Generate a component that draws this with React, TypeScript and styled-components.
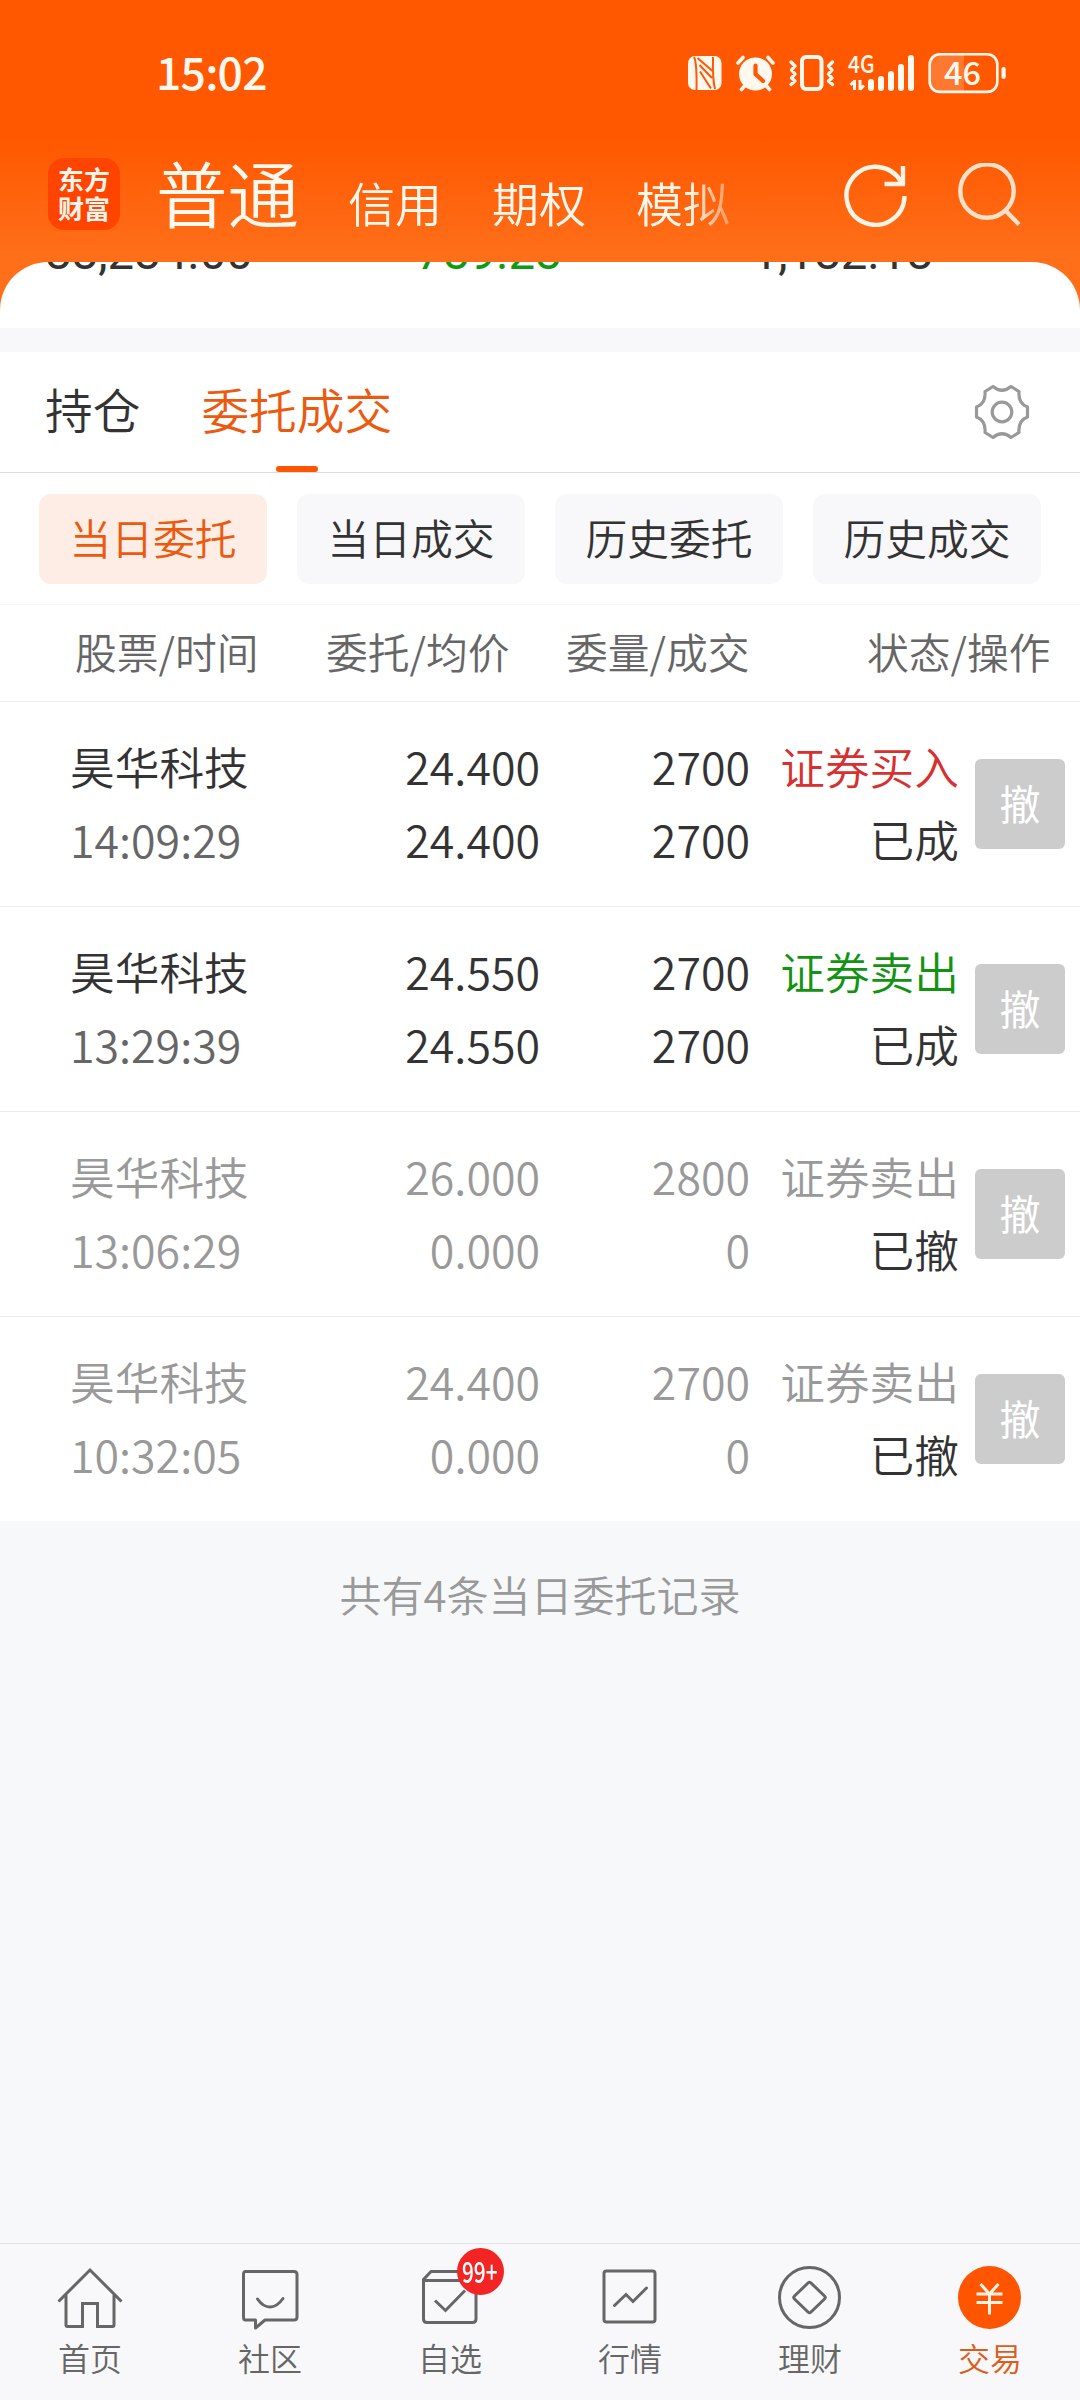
import React from "react";
import styled, { createGlobalStyle, css } from "styled-components";

const GlobalStyle = createGlobalStyle`
  html, body { margin: 0; padding: 0; background: #f6f8fa; }
  body {
    font-family: "Noto Sans CJK SC", "Noto Sans", sans-serif;
    font-weight: 350;
    color: #333;
  }
  * { box-sizing: border-box; }
  button { font: inherit; color: inherit; border: 0; padding: 0; background: none; }
`;

const Screen = styled.div`
  width: 1080px;
  height: 2400px;
  display: flex;
  flex-direction: column;
  overflow: hidden;
  white-space: nowrap;
  background: #f6f8fa;
`;

const Hero = styled.div`
  height: 328px;
  flex: none;
  display: flex;
  flex-direction: column;
  background: linear-gradient(#ff5800 0, #ff5800 140px, #ff6f1a 258px, #ff6f1a 100%);
`;

const StatusBar = styled.div`
  height: 146px;
  padding: 0 74px 0 156px;
  display: flex;
  align-items: center;
  justify-content: space-between;
  color: #fff8ee;
`;

const Clock = styled.span`
  font-size: 44.5px;
  line-height: 60px;
  margin-top: -4px;
  font-weight: 500;
  letter-spacing: -0.8px;
`;

const StatusIcons = styled.svg`
  width: 322px;
  height: 44px;
  display: block;
`;

const TitleBar = styled.header`
  height: 116px;
  padding: 0 57px 0 48px;
  display: flex;
  align-items: center;
  color: #fff8ee;
`;

const Logo = styled.div`
  width: 72px;
  height: 72px;
  margin-top: -20px;
  border-radius: 16px;
  background: #ff4400;
  display: flex;
  flex-direction: column;
  justify-content: center;
  align-items: center;
  font-size: 26px;
  line-height: 29px;
  padding-bottom: 2px;
  font-weight: 700;
  color: #fff4ea;
`;

const Accounts = styled.nav`
  width: 590px;
  height: 116px;
  margin-left: 36px;
  display: flex;
  align-items: baseline;
  overflow: hidden;
  mask-image: linear-gradient(90deg, #000 532px, transparent 597px);
`;

const Account = styled.span<{ $active?: boolean }>`
  font-size: ${(p) => (p.$active ? 71.5 : 47)}px;
  line-height: 90px;
  margin-right: ${(p) => (p.$active ? 49 : 50)}px;
`;

const HeaderIcon = styled.svg<{ $left: number }>`
  width: 64px;
  height: 64px;
  flex: none;
  margin-left: ${(p) => p.$left}px;
  margin-top: -18px;
  display: block;
  fill: none;
  stroke-width: 4.4;
`;

const Summary = styled.section`
  height: 66px;
  border-radius: 48px 48px 0 0;
  background: #fff;
  overflow: hidden;
  padding: 0 147px 0 45px;
  display: grid;
  grid-template-columns: 1fr 1fr 1fr;
`;

const Amount = styled.span<{ $tone?: "down"; $align: string }>`
  font-family: Roboto, "Noto Sans CJK SC", sans-serif;
  font-weight: 400;
  font-size: 47.3px;
  line-height: 60px;
  height: 60px;
  margin-top: -39px;
  text-align: ${(p) => p.$align};
  color: ${(p) => (p.$tone === "down" ? "#0f9a12" : "#333")};
`;

const Divider = styled.div`
  height: 24px;
  flex: none;
  background: #f8f8fa;
`;

const Tabs = styled.div`
  height: 121px;
  flex: none;
  padding: 0 50px 0 45px;
  display: flex;
  justify-content: space-between;
  background: #fff;
  border-bottom: 1px solid #dcdcdc;
`;

const TabGroup = styled.div`
  display: flex;
  gap: 61px;
`;

const Tab = styled.button<{ $active?: boolean }>`
  height: 120px;
  display: flex;
  flex-direction: column;
  align-items: center;
  justify-content: space-between;
  font-size: 47.7px;
  line-height: 114px;
  color: ${(p) => (p.$active ? "#ec5a10" : "#333")};
  ${(p) =>
    p.$active &&
    css`
      &::after {
        content: "";
        width: 42px;
        height: 6px;
        border-radius: 3px;
        background: #ff5500;
      }
    `}
`;

const Gear = styled.svg`
  width: 56px;
  height: 56px;
  margin-top: 32px;
  fill: none;
  stroke: #999;
  stroke-width: 3.2;
`;

const Filters = styled.div`
  height: 132px;
  flex: none;
  padding: 21px 39px 0;
  display: grid;
  grid-template-columns: repeat(4, 228px);
  gap: 30px;
  background: #fff;
  border-bottom: 1px solid #f5f5f5;
`;

const Filter = styled.button<{ $active?: boolean }>`
  height: 90px;
  border-radius: 12px;
  font-size: 41.8px;
  line-height: 87px;
  padding-bottom: 3px;
  text-align: center;
  background: ${(p) => (p.$active ? "#feede5" : "#f8f8fa")};
  color: ${(p) => (p.$active ? "#ec5a10" : "#333")};
`;

const ColumnHeads = styled.div`
  height: 96px;
  flex: none;
  padding: 0 31px 0 75px;
  display: grid;
  grid-template-columns: 251px 240px 301px 1fr;
  background: #fff;
  font-size: 41.8px;
  line-height: 93px;
  color: #666;

  span:last-child { text-align: right; }
`;

const OrderRow = styled.div<{ $dim?: boolean }>`
  height: 205px;
  flex: none;
  padding: 27px 15px 0 70px;
  display: grid;
  grid-template-columns: 230px 240px 210px 210px 90px;
  justify-content: space-between;
  border-top: 1px solid #ececec;
  background: #fff;
  color: ${(p) => (p.$dim ? "#999" : "#333")};
`;

const Pair = styled.div<{ $right?: boolean }>`
  display: flex;
  flex-direction: column;
  align-items: ${(p) => (p.$right ? "flex-end" : "flex-start")};
  font-size: 44.7px;
  line-height: 73px;
  height: 146px;
`;

const Time = styled.span<{ $dim?: boolean }>`
  color: ${(p) => (p.$dim ? "#999" : "#666")};
`;

const Side = styled.span<{ $color: string }>`
  color: ${(p) => p.$color};
`;

const State = styled.span`
  color: #333;
`;

const Cancel = styled.button`
  width: 90px;
  height: 90px;
  margin-top: 30px;
  border-radius: 6px;
  background: #ccc;
  color: #fff;
  font-size: 41px;
  line-height: 87px;
  padding-bottom: 3px;
  font-weight: 400;
  text-align: center;
`;

const Columns = styled.div`
  display: grid;
  grid-template-columns: 230px 240px 210px 209px;
`;

const OrderLine = styled(OrderRow)`
  grid-template-columns: 889px 90px;
`;

const Summing = styled.p`
  margin: 0;
  flex: 1;
  padding-top: 43px;
  text-align: center;
  font-size: 42px;
  line-height: 60px;
  color: #999;
`;

const BottomNav = styled.nav`
  height: 157px;
  flex: none;
  display: grid;
  grid-template-columns: repeat(6, 1fr);
  border-top: 1px solid #e2e2e4;
  background: #f8f8fa;
`;

const NavItem = styled.div<{ $active?: boolean }>`
  position: relative;
  padding-top: 15px;
  display: flex;
  flex-direction: column;
  align-items: center;
  font-size: 32px;
  line-height: 40px;
  color: ${(p) => (p.$active ? "#dd5c18" : "#666")};
`;

const NavIcon = styled.svg`
  width: 72px;
  height: 72px;
  margin-bottom: 6px;
  display: block;
  fill: none;
  stroke: #666;
  stroke-width: 3;
`;

const Badge = styled.span`
  position: absolute;
  left: 96.5px;
  top: 4px;
  width: 47px;
  height: 47px;
  border-radius: 50%;
  background: #f22424;
  color: #fff;
  display: flex;
  justify-content: center;
  font-size: 29px;
  line-height: 44px;
  font-weight: 500;
`;

const BadgeCount = styled.span`
  transform: scaleX(0.72);
`;

const SvgText = styled.text`
  font-weight: 500;
  fill: #fff8ee;
`;

function StatusGlyphs() {
  const bars = [
    [868, 79],
    [878, 76],
    [888, 71],
    [898, 64],
    [908, 55],
  ];
  return (
    <StatusIcons viewBox="684 51 322 44" fill="#fff8ee">
      <rect x="688" y="56" width="33.5" height="34" rx="7" />
      <path
        d="M694 57 Q697 62 696.500 90 M697.500 58 L712.500 71 M699.500 65 L712 78 M700 71.500 L711 88.500 M713 57 Q712.500 80 715 89"
        stroke="#ff5800" strokeWidth="2" fill="none"
      />

      <circle cx="755.500" cy="74" r="16.500" />
      <path d="M738 63 L743 57.500 M773 63 L768 57.500 M744.500 86 L741.500 89.500 M766.500 86 L769.500 89.500" stroke="#fff8ee" strokeWidth="3.600" strokeLinecap="round" />
      <path d="M755.500 65.500 V74 L763 81" stroke="#ff5800" strokeWidth="4.200" fill="none" strokeLinecap="round" />

      <rect x="802" y="57" width="19.500" height="32" rx="4" fill="none" stroke="#fff8ee" strokeWidth="4" />
      <path
        d="M791 62 L795 66 L791.500 70 L795 74 L791.500 78 L795 81 L791 84.500 M832.500 62 L828.500 66 L832 70 L828.500 74 L832 78 L828.500 81 L832.500 84.500"
        fill="none" stroke="#fff8ee" strokeWidth="3.400" strokeLinejoin="round" strokeLinecap="round"
      />

      <SvgText x="848" y="73" fontSize="24" textLength="26.500" lengthAdjust="spacingAndGlyphs">4G</SvgText>
      <path d="M854.500 80 V90 M850.500 85 L854.500 81 M860 80 V90 M860 89.500 L864 85.500" stroke="#fff8ee" strokeWidth="3" fill="none" />
      {bars.map(([x, y]) => (
        <rect key={x} x={x} y={y} width="6" height={91 - y} rx="3" />
      ))}

      <path d="M939 55 H964 V91 H939 A9 9 0 0 1 930 82 V64 A9 9 0 0 1 939 55Z" fillOpacity="0.2" />
      <rect x="929.700" y="54.300" width="67.600" height="37.600" rx="10" fill="none" stroke="#fff8ee" strokeWidth="2.600" />
      <rect x="1001.500" y="67" width="4.200" height="12" rx="2" />
      <SvgText x="962.500" y="85.300" fontSize="32.500" textAnchor="middle">46</SvgText>
    </StatusIcons>
  );
}

const navItems = [
  {
    label: "首页",
    icon: (
      <path d="M4.500 42.500 L36 11 L67.500 42.500 M12 36 V66 Q12 67.500 13.500 67.500 H28.500 V44.500 H43.500 V67.500 H58.500 Q60 67.500 60 66 V36" />
    ),
  },
  {
    label: "社区",
    icon: (
      <>
        <path d="M11.500 12.500 H60 Q63 12.500 63 15.500 V58 Q63 61 60 61 H31 L21.500 69 V61 H11.500 Q9.500 61 9.500 58 V15.500 Q9.500 12.500 11.500 12.500Z" strokeLinejoin="round" />
        <path d="M23.500 40 Q29 48 36 48 Q43 48 49 39.500" strokeLinecap="round" />
      </>
    ),
  },
  {
    label: "自选",
    badge: "99+",
    icon: (
      <>
        <path d="M9.500 21.500 H62 V60 Q62 63.500 58.500 63.500 H13 Q9.500 63.500 9.500 60 V20.500 L17 12.500 H55 L62 21" strokeLinejoin="round" />
        <path d="M21 41.500 L31.500 51.500 L51 31.500" />
      </>
    ),
  },
  {
    label: "行情",
    icon: (
      <>
        <rect x="10" y="12" width="51" height="51" rx="2.500" />
        <path d="M20.500 46.500 L32 35.500 L39 42.500 L52.500 29" strokeLinecap="round" />
      </>
    ),
  },
  {
    label: "理财",
    icon: (
      <>
        <circle cx="35.500" cy="38.500" r="30" />
        <path d="M34 24 Q35.500 22.500 37 24 L50.500 37 Q52 38.500 50.500 40 L37 53 Q35.500 54.500 34 53 L20.500 40 Q19 38.500 20.500 37Z" />
      </>
    ),
  },
  {
    label: "交易",
    active: true,
    icon: (
      <>
        <circle cx="35.500" cy="38.500" r="31.500" fill="#ff5500" stroke="none" />
        <path d="M26.500 25 L35.500 35 L44.500 25 M22.500 35 H48.500 M22.500 43.500 H48.500 M35.500 35 V55.500" stroke="#fff4e6" />
      </>
    ),
  },
];

const RED = "#d82f2f";
const GREEN = "#129412";

const orders = [
  { time: "14:09:29", price: "24.400", avg: "24.400", qty: "2700", filled: "2700", side: "证券买入", state: "已成", color: RED },
  { time: "13:29:39", price: "24.550", avg: "24.550", qty: "2700", filled: "2700", side: "证券卖出", state: "已成", color: GREEN },
  { time: "13:06:29", price: "26.000", avg: "0.000", qty: "2800", filled: "0", side: "证券卖出", state: "已撤", color: "#999", dim: true },
  { time: "10:32:05", price: "24.400", avg: "0.000", qty: "2700", filled: "0", side: "证券卖出", state: "已撤", color: "#999", dim: true },
];

export default function App() {
  return (
    <>
      <GlobalStyle />
      <Screen>
        <Hero>
          <StatusBar>
            <Clock>15:02</Clock>
            <StatusGlyphs />
          </StatusBar>
          <TitleBar>
            <Logo>
              <span>东方</span>
              <span>财富</span>
            </Logo>
            <Accounts>
              <Account $active>普通</Account>
              <Account>信用</Account>
              <Account>期权</Account>
              <Account>模拟</Account>
            </Accounts>
            <HeaderIcon $left={98} viewBox="0 0 64 64" stroke="#fff4e6">
              <path d="M60.500 33 A29 29 0 1 1 57 19 M59 3 V22 M40.500 21 H61" />
            </HeaderIcon>
            <HeaderIcon $left={50} viewBox="0 0 64 64" stroke="#ffe0c8">
              <circle cx="29" cy="28" r="26.700" />
              <path d="M47 47 L61 61.500" />
            </HeaderIcon>
          </TitleBar>
          <Summary>
            <Amount $align="left">88,284.00</Amount>
            <Amount $align="center" $tone="down">789.28</Amount>
            <Amount $align="right">1,182.18</Amount>
          </Summary>
        </Hero>
        <Divider />
        <Tabs>
          <TabGroup>
            <Tab>持仓</Tab>
            <Tab $active>委托成交</Tab>
          </TabGroup>
          <Gear viewBox="-28 -28 56 56">
            <circle r="9.800" />
            <path d="M-9 -25.500 Q0 -18 9 -25.500 L17 -20.500 Q16 -8.500 25.500 -5 V5 Q16 8.500 17 20.500 L9 25.500 Q0 18 -9 25.500 L-17 20.500 Q-16 8.500 -25.500 5 V-5 Q-16 -8.500 -17 -20.500Z" strokeLinejoin="round" />
          </Gear>
        </Tabs>
        <Filters>
          <Filter $active>当日委托</Filter>
          <Filter>当日成交</Filter>
          <Filter>历史委托</Filter>
          <Filter>历史成交</Filter>
        </Filters>
        <ColumnHeads>
          <span>股票/时间</span>
          <span>委托/均价</span>
          <span>委量/成交</span>
          <span>状态/操作</span>
        </ColumnHeads>
        {orders.map((o) => (
          <OrderLine key={o.time} $dim={o.dim}>
            <Columns>
              <Pair>
                <span>昊华科技</span>
                <Time $dim={o.dim}>{o.time}</Time>
              </Pair>
              <Pair $right>
                <span>{o.price}</span>
                <span>{o.avg}</span>
              </Pair>
              <Pair $right>
                <span>{o.qty}</span>
                <span>{o.filled}</span>
              </Pair>
              <Pair $right>
                <Side $color={o.color}>{o.side}</Side>
                <State>{o.state}</State>
              </Pair>
            </Columns>
            <Cancel>撤</Cancel>
          </OrderLine>
        ))}
        <Summing>共有4条当日委托记录</Summing>
        <BottomNav>
          {navItems.map((n) => (
            <NavItem key={n.label} $active={n.active}>
              <NavIcon viewBox="0 0 72 72">{n.icon}</NavIcon>
              {n.label}
              {n.badge && (
                <Badge>
                  <BadgeCount>{n.badge}</BadgeCount>
                </Badge>
              )}
            </NavItem>
          ))}
        </BottomNav>
      </Screen>
    </>
  );
}
